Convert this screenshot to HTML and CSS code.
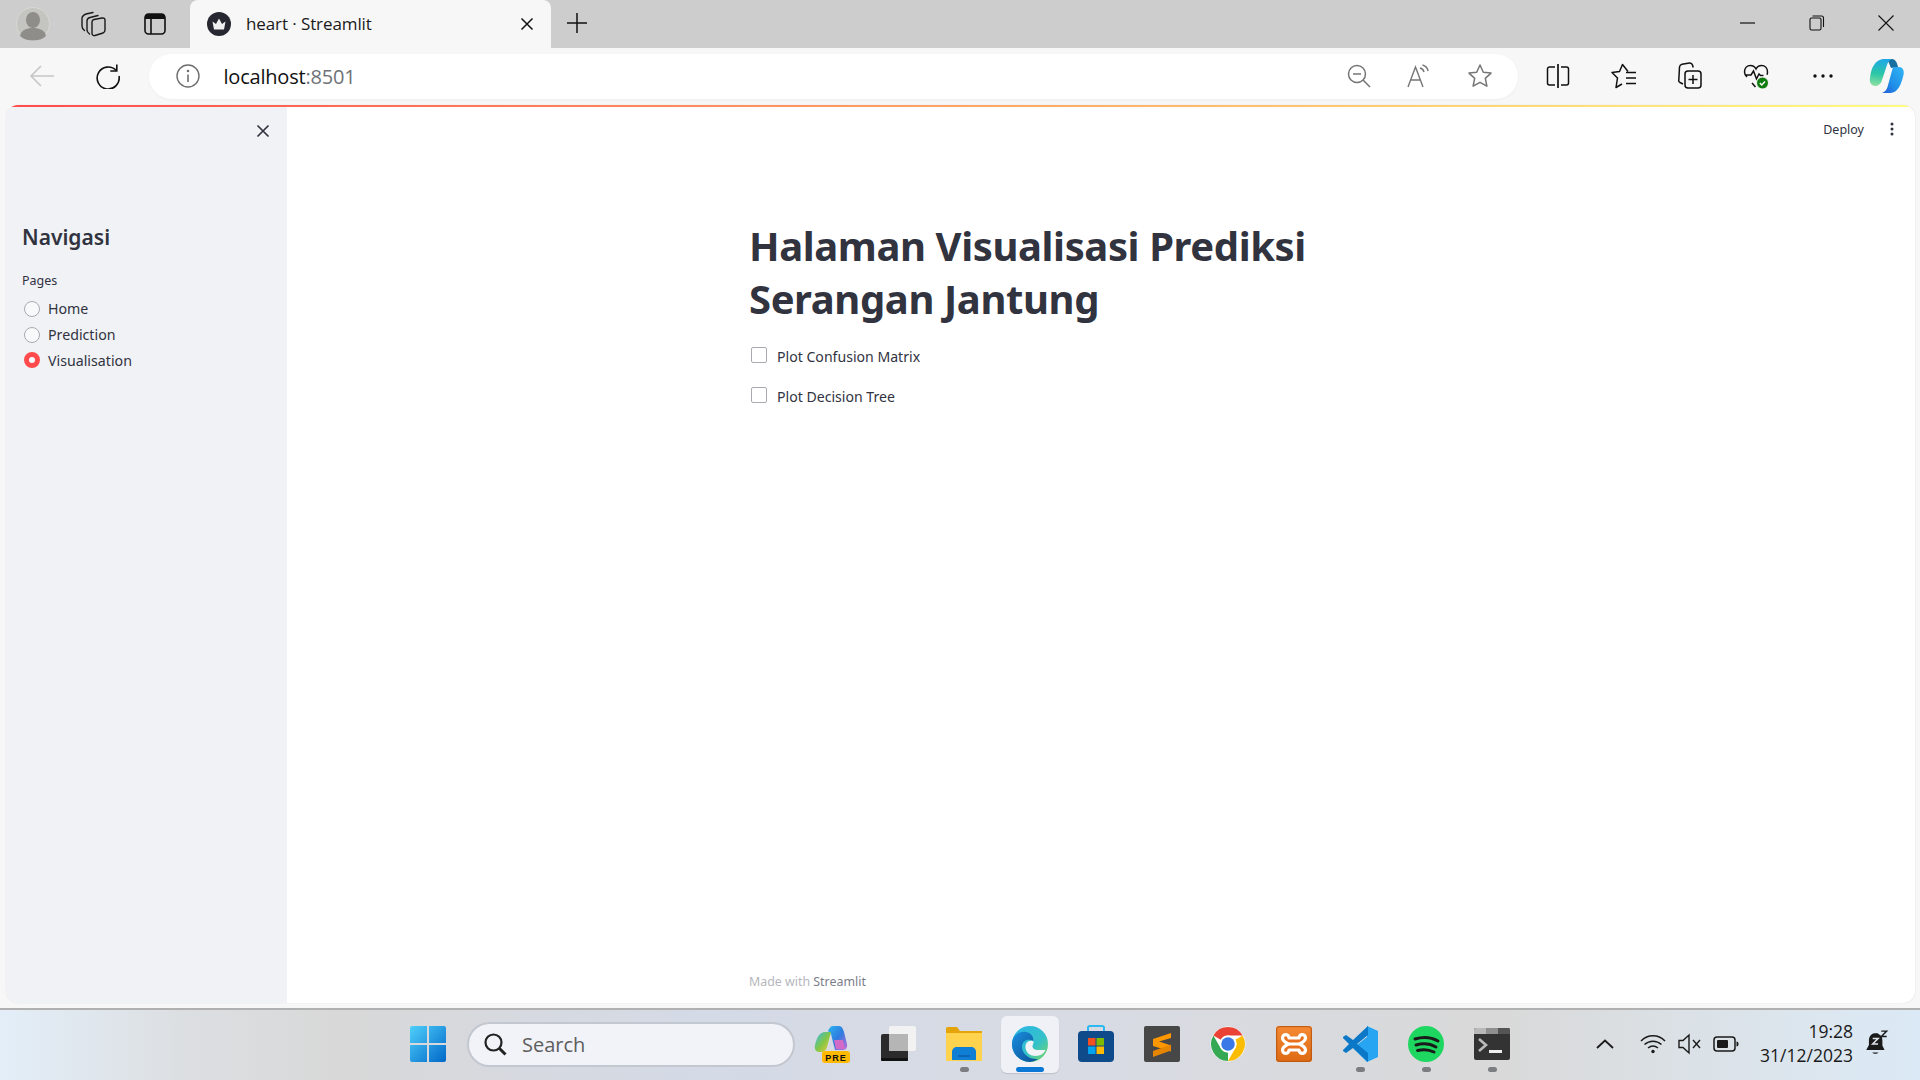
FILE: index.html
```html
<!DOCTYPE html>
<html lang="en">
<head>
<meta charset="utf-8">
<title>heart · Streamlit</title>
<link rel="stylesheet" href="styles.css">
</head>
<body>
<div class="browser">
  <header class="tabstrip">
    <div class="strip-left">
      <div class="strip-btn profile-cell">
        <svg width="34" height="34" viewBox="0 0 34 34"><circle cx="17" cy="17" r="16.500" fill="#c4c4c0" stroke="#d8d8d4"/><ellipse cx="17" cy="13" rx="7" ry="8" fill="#8f8d89"/><path d="M4 29c1-6 7-8 13-8s12 2 13 8c-3 3-8 4.500-13 4.500S7 32 4 29z" fill="#8f8d89"/></svg>
      </div>
      <div class="strip-btn collections-cell">
        <svg width="26" height="26" viewBox="-1 -1 26 26" fill="none" stroke="#1a1a1a" stroke-width="1.400" stroke-linecap="round"><path d="M13 7.500L21 6c2-.3 3 .5 3 2v10c0 1.500-.5 2.500-2 3l-8 2.500c-1.500.5-3-.5-3-2V10c0-1.500.5-2.200 2-2.500z"/><path d="M17 3.500L9 5.500C7 6 6 7 6 9v9c0 2 1 3 2.500 4"/><path d="M12 .5L5 2C2.500 3 1 4 1 6.500V14c0 2 1 3.500 2.500 4.500"/></svg>
      </div>
      <div class="strip-btn vtabs-cell">
        <svg width="24" height="24" viewBox="0 0 24 24" fill="none"><rect x="2" y="2" width="20" height="20" rx="3.500" stroke="#111" stroke-width="1.600"/><path d="M2 5.500A3.500 3.500 0 0 1 5.500 2h13A3.500 3.500 0 0 1 22 5.500V7H2z" fill="#111"/><path d="M8 7v15" stroke="#111" stroke-width="1.600"/></svg>
      </div>
    </div>
    <div class="tab">
      <svg class="favicon" width="24" height="24" viewBox="0 0 24 24"><circle cx="12" cy="12" r="12" fill="#262730"/><path d="M5.500 9.500l3.500 2.500L12 6.500l3 5.500 3.500-2.500-1.500 8H7z" fill="#f1f1f1"/></svg>
      <span class="tab-title">heart · Streamlit</span>
      <svg class="tab-close" width="14" height="14" viewBox="0 0 14 14"><path d="M1.500 1.500l11 11M12.500 1.500l-11 11" stroke="#111" stroke-width="1.500"/></svg>
    </div>
    <div class="new-tab">
      <svg width="22" height="22" viewBox="0 0 22 22"><path d="M11 1v20M1 11h20" stroke="#111" stroke-width="1.500"/></svg>
    </div>
    <div class="window-controls">
      <div class="win-btn"><svg width="16" height="16" viewBox="0 0 16 16"><path d="M0 8h15" stroke="#111" stroke-width="1.200"/></svg></div>
      <div class="win-btn"><svg width="16" height="16" viewBox="0 0 16 16" fill="none" stroke="#111" stroke-width="1.100"><rect x="1" y="3" width="11" height="12" rx="1.500"/><path d="M3.500 1h9a2 2 0 0 1 2 2v9"/></svg></div>
      <div class="win-btn"><svg width="16" height="16" viewBox="0 0 16 16"><path d="M.5.500l15 15M15.500.500l-15 15" stroke="#111" stroke-width="1.100"/></svg></div>
    </div>
  </header>

  <nav class="toolbar">
    <div class="nav-btn back-btn"><svg width="26" height="24" viewBox="0 0 26 24" fill="none" stroke="#c6c6c6" stroke-width="1.600"><path d="M25 12H2M12 2L2 12l10 10"/></svg></div>
    <div class="nav-btn reload-btn"><svg width="26" height="26" viewBox="0 0 26 26" fill="none" stroke="#111" stroke-width="1.600"><path d="M21.200 7.500A11 11 0 1 0 24 13"/><path d="M21.800 1.500v6.500h-6.500"/></svg></div>
    <div class="omnibox">
      <svg class="info-icon" width="24" height="24" viewBox="0 0 24 24" fill="none" stroke="#6f6f6f" stroke-width="1.400"><circle cx="12" cy="12" r="11"/><path d="M12 10.500v7.500" stroke-width="1.600"/><circle cx="12" cy="7" r=".6" fill="#6f6f6f"/></svg>
      <span class="url">localhost<span class="url-port">:8501</span></span>
      <div class="omni-actions">
        <svg width="24" height="24" viewBox="0 0 24 24" fill="none" stroke="#757575" stroke-width="1.500"><circle cx="10" cy="10" r="8.500"/><path d="M6 10h8M16 16l7 7"/></svg>
        <svg width="26" height="26" viewBox="0 0 26 26" fill="none" stroke="#757575" stroke-width="1.400"><path d="M2 24L9.500 4 17 24M4.800 17h9.500"/><path d="M14 5c2 .5 3.500 2 4 4M16.500 2c3 .8 5 3 5.700 6"/></svg>
        <svg width="26" height="26" viewBox="0 0 26 26" fill="none" stroke="#757575" stroke-width="1.500" stroke-linejoin="round"><path d="M13 2l3.300 7.200 7.700.9-5.700 5.300 1.600 7.800L13 19.300 6.100 23.200l1.600-7.800L2 10.100l7.700-.9z"/></svg>
      </div>
    </div>
    <div class="tool-icons">
      <div class="tool-btn"><svg width="24" height="26" viewBox="0 0 24 26" fill="none" stroke="#111" stroke-width="1.500"><path d="M9 4H3.500A2 2 0 0 0 1.500 6v14a2 2 0 0 0 2 2H9M15 4h5.500a2 2 0 0 1 2 2v14a2 2 0 0 1-2 2H15"/><path d="M12 1v24" stroke-width="1.700"/></svg></div>
      <div class="tool-btn"><svg width="26" height="26" viewBox="0 0 26 26" fill="none" stroke="#111" stroke-width="1.500" stroke-linejoin="round"><path d="M17 8.500l-5.500-7-3 7-7.500 1 5.500 5.500-1.500 9.500 6-3.500"/><path d="M15 9.500h10M15 15h10M15 20.500h10"/></svg></div>
      <div class="tool-btn"><svg width="26" height="28" viewBox="0 0 26 28" fill="none" stroke="#111" stroke-width="1.500"><path d="M6 22L3 20.500c-1-.5-1.500-1.500-1.200-2.500L2.500 5c.2-1.500 1.200-2.500 2.500-2.800L12.500 1c1.300-.2 2.500.5 3 2l.7 2.500"/><rect x="8" y="9" width="16" height="17" rx="3"/><path d="M16 13v9M11.500 17.500h9"/></svg></div>
      <div class="tool-btn"><svg width="28" height="28" viewBox="0 0 28 28" fill="none"><path d="M4 15C2 13 1.500 12 1.500 10 1.500 6 4 3.500 7.500 3.500c2.500 0 4.500 1.500 5.500 3.500 1-2 3-3.500 5.500-3.500 3.500 0 6 2.500 6 6.500 0 1-.2 2-.5 2.800M2 13h6l2.500-4 3 8 2.500-5 1.500 1.500h3M9 21l3.500 4" stroke="#111" stroke-width="1.500"/><circle cx="19.500" cy="21" r="6" fill="#107c10" stroke="#f7f7f7"/><path d="M16.800 21l2 2 3.200-3.500" stroke="#fff" stroke-width="1.400" fill="none"/></svg></div>
      <div class="tool-btn"><svg width="22" height="6" viewBox="0 0 22 6" fill="#111"><circle cx="3" cy="3" r="1.700"/><circle cx="11" cy="3" r="1.700"/><circle cx="19" cy="3" r="1.700"/></svg></div>
      <div class="tool-btn"><svg width="36" height="36" viewBox="0 0 36 36"><defs><linearGradient id="cpL" x1=".4" y1="0" x2=".3" y2="1"><stop offset="0" stop-color="#1fa8e6"/><stop offset=".55" stop-color="#2cc6a6"/><stop offset="1" stop-color="#8fe0a0"/></linearGradient><linearGradient id="cpR" x1="1" y1="0" x2="0" y2="1"><stop offset="0" stop-color="#32b6f5"/><stop offset=".6" stop-color="#1f8ee8"/><stop offset="1" stop-color="#2458d8"/></linearGradient></defs><path d="M17 1h6c3 0 5 3 6 8l-7 1C20 5 19 2 17 1z" fill="#17709f"/><path d="M1 20C2 10 6 2 14 1h9c-3 1-4 3-5 6l-5 15c-1 4-4 6-7 6-3 0-6-3-5-8z" fill="url(#cpL)"/><path d="M24 9h6c4 0 5.500 4 4.500 8-2 9-6 18-13 18H13c3-1 4.500-3 5.500-6z" fill="url(#cpR)"/></svg></div>
    </div>
  </nav>

  <div class="window">
    <div class="decoration"></div>
    <div class="app">
      <aside class="sidebar">
        <div class="side-top"><svg width="14" height="14" viewBox="0 0 14 14"><path d="M1.500 1.500l11 11M12.500 1.500l-11 11" stroke="#31333f" stroke-width="1.700"/></svg></div>
        <h2 class="side-title">Navigasi</h2>
        <div class="radio-label">Pages</div>
        <div class="radio-row"><span class="radio"></span><span class="radio-text">Home</span></div>
        <div class="radio-row"><span class="radio"></span><span class="radio-text">Prediction</span></div>
        <div class="radio-row"><span class="radio radio-on"></span><span class="radio-text">Visualisation</span></div>
      </aside>
      <main class="main">
        <div class="app-header">
          <span class="deploy">Deploy</span>
          <svg width="16" height="16" viewBox="0 0 16 16" fill="#31333f"><circle cx="8" cy="3" r="1.500"/><circle cx="8" cy="8" r="1.500"/><circle cx="8" cy="13" r="1.500"/></svg>
        </div>
        <div class="block">
          <h1 class="title">Halaman Visualisasi Prediksi Serangan Jantung</h1>
          <div class="check-row"><span class="checkbox"></span><span class="check-text">Plot Confusion Matrix</span></div>
          <div class="check-row"><span class="checkbox"></span><span class="check-text">Plot Decision Tree</span></div>
        </div>
        <footer class="footer">Made with <span class="footer-brand">Streamlit</span></footer>
      </main>
    </div>
  </div>

  <div class="taskbar">
    <div class="start-tile">
      <svg width="36" height="36" viewBox="0 0 36 36"><defs><linearGradient id="winG" x1="0" y1="0" x2="1" y2="1"><stop offset="0" stop-color="#4fd0fb"/><stop offset="1" stop-color="#0067c8"/></linearGradient></defs><path d="M2 0h15v17H0V2a2 2 0 0 1 2-2zM19 0h15a2 2 0 0 1 2 2v15H19zM0 19h17v17H2a2 2 0 0 1-2-2zM19 19h17v15a2 2 0 0 1-2 2H19z" fill="url(#winG)"/></svg>
    </div>
    <div class="search">
      <svg width="24" height="24" viewBox="0 0 24 24" fill="none" stroke="#222" stroke-width="2.200"><circle cx="10.500" cy="10.500" r="8"/><path d="M16.500 16.500l6 6" stroke-width="3"/></svg>
      <span class="search-text">Search</span>
    </div>
    <div class="apps">
      <div class="app-cell"><svg width="36" height="38" viewBox="0 0 36 38"><defs><linearGradient id="cp2" x1="0" y1="0" x2="1" y2="1"><stop offset="0" stop-color="#2bb4ee"/><stop offset=".5" stop-color="#2f7be0"/><stop offset="1" stop-color="#c06fd8"/></linearGradient><linearGradient id="cp3" x1="0" y1="0" x2="1" y2="1"><stop offset="0" stop-color="#35b8f0"/><stop offset=".5" stop-color="#7fc74a"/><stop offset="1" stop-color="#f5c832"/></linearGradient></defs><path d="M14 6c1-3 3-5 5-5h6c3 0 4 3 5 6l3 12c.7 3-1 6-4 6h-8L17 9z" fill="url(#cp2)"/><path d="M1 20C3 12 6 7 11 7h6l-4 15c-.7 3-3 5-6 5H5c-3 0-5-3-4-7z" fill="url(#cp3)"/><path d="M20 15h9l2 9h-9z" fill="#d36ac8"/><rect x="8" y="26" width="28" height="12" rx="3" fill="#ffb900"/><text x="22" y="35.500" class="pre-text" text-anchor="middle">PRE</text></svg></div>
      <div class="app-cell"><svg width="36" height="38" viewBox="0 0 36 38"><rect x="1" y="9" width="27" height="27" rx="2" fill="#2b2b2b"/><rect x="1" y="33" width="27" height="3" rx="1" fill="#111"/><rect x="9" y="1" width="27" height="25" rx="2" fill="#f2f2f2"/><rect x="9" y="9" width="19" height="17" fill="#b5b5b5"/></svg></div>
      <div class="app-cell has-dot"><svg width="36" height="36" viewBox="0 0 36 36"><path d="M0 2.500A1.500 1.500 0 0 1 1.500 1H11l3 4h22v29H0z" fill="#e5a50a"/><path d="M0 7h36v28H0z" fill="#ffd34e"/><path d="M6 34V26c0-3 2-5 5-5h14c3 0 5 2 5 5v8z" fill="#0f7fd6"/><path d="M12 30h12" stroke="#0a5ea8" stroke-width="1.500"/></svg><span class="run-dot"></span></div>
      <div class="app-cell edge-cell"><svg width="36" height="36" viewBox="0 0 36 36"><defs><linearGradient id="edgeA" x1="0" y1="0" x2="1" y2="1"><stop offset="0" stop-color="#2bb5e8"/><stop offset=".6" stop-color="#35c1c8"/><stop offset="1" stop-color="#7ed957"/></linearGradient><linearGradient id="edgeB" x1="0" y1="0" x2="1" y2="1"><stop offset="0" stop-color="#1a8fde"/><stop offset="1" stop-color="#0c4f94"/></linearGradient></defs><circle cx="18" cy="18" r="18" fill="url(#edgeA)"/><path d="M0 18C0 9 8 5 14 6c6 1 8 6 7 9-4-3-11-1-11 6 0 7 8 13 16 12a18 18 0 0 1-8 3C8 36 0 28 0 18z" fill="url(#edgeB)"/><path d="M21 15c-5-1-8 2-7.500 7 .5 5 5 8 10 8 5 0 9-3 10-6h-7c-3 .5-6-1-6-3.500 0-2.500 2-3.500 .5-5.500z" fill="#f2f3f6"/></svg><span class="active-bar"></span></div>
      <div class="app-cell"><svg width="36" height="38" viewBox="0 0 36 38"><path d="M10 8V3a2 2 0 0 1 2-2h12a2 2 0 0 1 2 2v5" fill="none" stroke="#2cb8f0" stroke-width="2"/><rect y="6" width="36" height="31" rx="4" fill="#0f4a8a"/><rect x="10" y="13" width="7.500" height="7.500" fill="#f25022"/><rect x="18.500" y="13" width="7.500" height="7.500" fill="#7fba00"/><rect x="10" y="21.500" width="7.500" height="7.500" fill="#00a4ef"/><rect x="18.500" y="21.500" width="7.500" height="7.500" fill="#ffb900"/></svg></div>
      <div class="app-cell"><svg width="36" height="36" viewBox="0 0 36 36"><rect width="36" height="36" rx="2" fill="#474747"/><path d="M27 7L9 13v7l18 5.500v-6L15 15.500l12-3.500z" fill="#ff9800"/><path d="M27 18.500v6L9 31v-6z" fill="#e68600"/></svg></div>
      <div class="app-cell"><svg width="36" height="36" viewBox="0 0 32 32"><circle cx="16" cy="16" r="15.500" fill="#fff"/><path d="M3 8.500A15 15 0 0 1 29 8.500H16A7.500 7.500 0 0 0 9.500 12.250z" fill="#ea4335"/><path d="M3 8.500A15 15 0 0 1 29 8.500H16A7.500 7.500 0 0 0 9.500 12.250z" fill="#fbbc04" transform="rotate(120 16 16)"/><path d="M3 8.500A15 15 0 0 1 29 8.500H16A7.500 7.500 0 0 0 9.500 12.250z" fill="#34a853" transform="rotate(240 16 16)"/><circle cx="16" cy="16" r="7.500" fill="#fff"/><circle cx="16" cy="16" r="6" fill="#3b78e7"/></svg></div>
      <div class="app-cell"><svg width="36" height="36" viewBox="0 0 36 36"><defs><linearGradient id="xa" x1="0" y1="0" x2="0" y2="1"><stop offset="0" stop-color="#f58a35"/><stop offset="1" stop-color="#dd6a12"/></linearGradient></defs><rect width="36" height="36" rx="3" fill="url(#xa)"/><rect x=".7" y=".7" width="34.600" height="34.600" rx="2.500" fill="none" stroke="#b9540f"/><path d="M13 12C13 7.500 6.500 7.500 6.500 12c0 3 3 4.500 6 6-3 1.500-6 3-6 6 0 4.500 6.500 4.500 6.500 0h10c0 4.500 6.500 4.500 6.500 0 0-3-3-4.500-6-6 3-1.500 6-3 6-6 0-4.500-6.500-4.500-6.500 0z" fill="#e8701f" stroke="#fff" stroke-width="3.200" stroke-linejoin="round"/><path d="M13 18h10" stroke="#fff" stroke-width="3"/></svg></div>
      <div class="app-cell has-dot"><svg width="36" height="36" viewBox="0 0 36 36"><path d="M25 0l11 5v26l-11 5-14-14 14-11z" fill="#27a5f2"/><path d="M26 0L11 14 4 9 1 11v1l6 6-6 6v1l3 2 7-5 15 14V27L15 18 26 9z" fill="#0a77c7"/></svg><span class="run-dot"></span></div>
      <div class="app-cell has-dot"><svg width="36" height="36" viewBox="0 0 36 36"><circle cx="18" cy="18" r="18" fill="#1ed760"/><path d="M7 13c8-2.500 16-2 23 2M8 19c7-2 14-1.500 20 2M9.500 24.500c6-1.500 11.500-1 16.500 1.500" fill="none" stroke="#1a1a1a" stroke-width="3" stroke-linecap="round"/></svg><span class="run-dot"></span></div>
      <div class="app-cell has-dot"><svg width="36" height="32" viewBox="0 0 36 32"><rect width="36" height="32" rx="2" fill="#333"/><path d="M0 2a2 2 0 0 1 2-2h10v6H0z" fill="#b9b9b9"/><rect x="12" width="12" height="6" fill="#8f8f8f"/><path d="M24 0h10a2 2 0 0 1 2 2v4H24z" fill="#555"/><path d="M5 11l7 6-7 6" fill="none" stroke="#bbb" stroke-width="2.600"/><path d="M15 23.500h13" stroke="#eee" stroke-width="3"/></svg><span class="run-dot"></span></div>
    </div>
    <div class="tray">
      <svg class="tray-chevron" width="18" height="10" viewBox="0 0 18 10" fill="none" stroke="#1a1a1a" stroke-width="1.800"><path d="M1 9l8-7.500L17 9"/></svg>
      <svg class="tray-wifi" width="26" height="20" viewBox="0 0 26 20" fill="none" stroke="#1a1a1a" stroke-width="1.500"><path d="M1 7c7-7 17-7 24 0M4.500 10.500c5-4.500 12-4.500 17 0M8 14c3-2.500 7-2.500 10 0"/><circle cx="13" cy="17.500" r="1.700" fill="#1a1a1a" stroke="none"/></svg>
      <svg class="tray-sound" width="24" height="22" viewBox="0 0 24 22" fill="none" stroke="#1a1a1a" stroke-width="1.400"><path d="M1 7.500h4L11 2v18l-6-5.500H1z"/><path d="M15 7l7 8M22 7l-7 8"/></svg>
      <svg class="tray-batt" width="26" height="16" viewBox="0 0 26 16" fill="none"><rect x="1" y="1" width="21" height="14" rx="3" stroke="#1a1a1a" stroke-width="1.500"/><rect x="4" y="4" width="11" height="8" rx="1" fill="#1a1a1a"/><path d="M23.500 5.500c1.500 0 2 1 2 2.500s-.5 2.500-2 2.500z" fill="#1a1a1a"/></svg>
      <div class="clock"><span>19:28</span><span>31/12/2023</span></div>
      <svg class="tray-bell" width="24" height="28" viewBox="0 0 22 26"><path d="M9 3c-4 .5-5.500 3.500-5.500 7v4L1 18.500h17l-2-4V10c0-1.500-.2-3-1-4.500L11.500 3z" fill="#1a1a1a"/><path d="M6.500 21c1.500 1.500 4.500 1.500 6 0z" fill="#1a1a1a"/><path d="M7 8h5l-5 5h5" fill="none" stroke="#e0e4ea" stroke-width="1.400"/><path d="M15 1h5l-5 5h5" fill="none" stroke="#1a1a1a" stroke-width="1.300"/></svg>
    </div>
  </div>
</div>
</body>
</html>
```
FILE: styles.css
```css
* { box-sizing: border-box; }
html, body { margin: 0; padding: 0; }
body { width: 1920px; height: 1080px; overflow: hidden; font-family: "Noto Sans", "Open Sans", sans-serif; color: #31333f; }
.browser { display: flex; flex-direction: column; height: 1080px; background: #f7f7f7; }

/* Tab strip */
.tabstrip { height: 48px; background: #cdcdcd; display: flex; align-items: stretch; flex: none; }
.strip-left { display: flex; width: 190px; padding-left: 16px; align-items: center; }
.strip-btn { display: flex; align-items: center; justify-content: center; height: 46px; }
.profile-cell { width: 34px; }
.collections-cell { width: 86px; }
.vtabs-cell { width: 38px; }
.tab { width: 361px; background: #f7f7f7; border-radius: 8px 8px 0 0; display: flex; align-items: center; padding: 0 17px 1px 17px; }
.favicon { flex: none; }
.tab-title { margin-left: 15px; font-family: "Open Sans", sans-serif; font-size: 17px; color: #1a1a1a; flex: 1; letter-spacing: -.1px; }
.new-tab { width: 52px; display: flex; align-items: center; justify-content: center; padding-bottom: 2px; }
.window-controls { margin-left: auto; display: flex; padding-right: 0; }
.win-btn { width: 69px; display: flex; align-items: center; justify-content: center; padding-bottom: 2px; }

/* Toolbar */
.toolbar { height: 57px; flex: none; display: flex; align-items: center; background: #f7f7f7; padding-bottom: 1px; }
.nav-btn { display: flex; align-items: center; justify-content: center; width: 66px; }
.back-btn { margin-left: 9px; }
.omnibox { margin-left: 9px; width: 1374px; height: 45px; border-radius: 23px; background: #fff; display: flex; align-items: center; padding-left: 27px; box-shadow: 0 1px 3px rgba(0,0,0,.04); }
.url { margin-left: 23px; font-family: "Open Sans", sans-serif; font-size: 20px; color: #111; letter-spacing: -.2px; }
.url-port { color: #6e7277; }
.omni-actions { margin-left: auto; display: flex; align-items: center; gap: 35px; padding-right: 25px; }
.tool-icons { display: flex; align-items: center; margin-left: 7px; }
.tool-btn { width: 66.200px; display: flex; align-items: center; justify-content: center; }
.tool-btn:last-child { margin-left: -2px; }

/* Window */
.window { flex: 1; margin: 0 5px 5px 6px; border-radius: 12px; overflow: hidden; display: flex; flex-direction: column; background: #fff; box-shadow: 0 0 1px rgba(0,0,0,.2); }
.decoration { height: 2px; flex: none; background: linear-gradient(90deg, #ff4b4b, #fffd80); }
.app { flex: 1; display: flex; min-height: 0; }

/* Sidebar */
.sidebar { width: 281px; flex: none; background: #f0f2f6; padding: 0 17px 0 16px; }
.side-top { height: 48px; display: flex; align-items: center; justify-content: flex-end; }
.side-title { margin: 64px 0 0; height: 36px; line-height: 36px; font-size: 21px; font-weight: 600; }
.radio-label { margin-top: 16px; height: 20px; line-height: 20px; font-size: 12.500px; }
.radio-row { display: flex; align-items: center; height: 25.700px; gap: 8px; padding-left: 2px; }
.radio-label + .radio-row { margin-top: 5px; }
.radio { width: 16px; height: 16px; border-radius: 50%; border: 1px solid #a9aab0; background: #f8f9fb; flex: none; }
.radio-on { border: 5px solid #ff4b4b; background: #fff; }
.radio-text { font-size: 14.200px; }

/* Main */
.main { flex: 1; display: flex; flex-direction: column; min-width: 0; }
.app-header { height: 44px; flex: none; display: flex; align-items: center; justify-content: flex-end; gap: 20px; padding-right: 15px; }
.deploy { font-size: 12.500px; }
.block { width: 704px; margin: 68px auto 0; }
.title { margin: 0; font-size: 40px; line-height: 53px; font-weight: 700; letter-spacing: -.4px; }
.check-row { display: flex; align-items: center; height: 24px; gap: 10px; margin-top: 16px; padding-left: 2px; }
.title + .check-row { margin-top: 18px; }
.checkbox { width: 16px; height: 16px; border: 1px solid #a9aab0; border-radius: 2px; background: #fff; flex: none; }
.check-text { font-size: 14.100px; padding-top: 2px; }
.footer { width: 704px; margin: auto auto 13px; height: 16px; line-height: 16px; font-size: 12.400px; color: #b6b7bd; }
.footer-brand { color: #7c7e8a; }

/* Taskbar */
.taskbar { height: 72px; flex: none; display: flex; align-items: center; border-top: 2px solid #b0b0b0; padding-bottom: 2px; background: linear-gradient(90deg, #e3eef8 0, #dcdfe2 180px, #d8d8d8 340px, #d4dae6 700px, #d8dbe3 1100px, #d9d9d9 1500px, #dce6ee 1800px, #dbe9f6 1920px); }
.start-tile { width: 66px; margin-left: 395px; display: flex; align-items: center; justify-content: center; }
.search { width: 328px; height: 45px; margin-left: 6px; border-radius: 23px; background: #f1f3f8; border: 2px solid #c3c7cf; display: flex; align-items: center; padding-left: 14px; gap: 15px; flex: none; }
.search-text { font-family: "Open Sans", sans-serif; font-size: 20px; color: #5d5d5d; }
.apps { display: flex; margin-left: 4px; flex: none; }
.app-cell { width: 66px; height: 57px; display: flex; align-items: center; justify-content: center; position: relative; }
.edge-cell { background: #eff1f6; border-radius: 6px; box-shadow: 0 1px 1px rgba(0,0,0,.12); margin: 0 4px; width: 58px; }
.run-dot { position: absolute; left: 29px; bottom: 1px; width: 9px; height: 5px; border-radius: 3px; background: #7b7d80; }
.active-bar { position: absolute; left: 15px; bottom: 1px; width: 28px; height: 5px; border-radius: 3px; background: #0a78d4; }
.pre-text { font-family: "Liberation Sans", sans-serif; font-size: 9px; font-weight: 700; letter-spacing: 1px; fill: #111; }
.tray { flex: 1; display: flex; align-items: center; padding-left: 71px; }
.tray-chevron { margin-right: 26px; }
.tray-wifi { margin-right: 12px; }
.tray-sound { margin-right: 11px; }
.clock { width: 114px; display: flex; flex-direction: column; align-items: flex-end; font-family: "Open Sans", sans-serif; font-size: 17.500px; line-height: 24px; color: #1a1a1a; margin-top: -2px; }
.tray-bell { margin-left: 12px; }
```
